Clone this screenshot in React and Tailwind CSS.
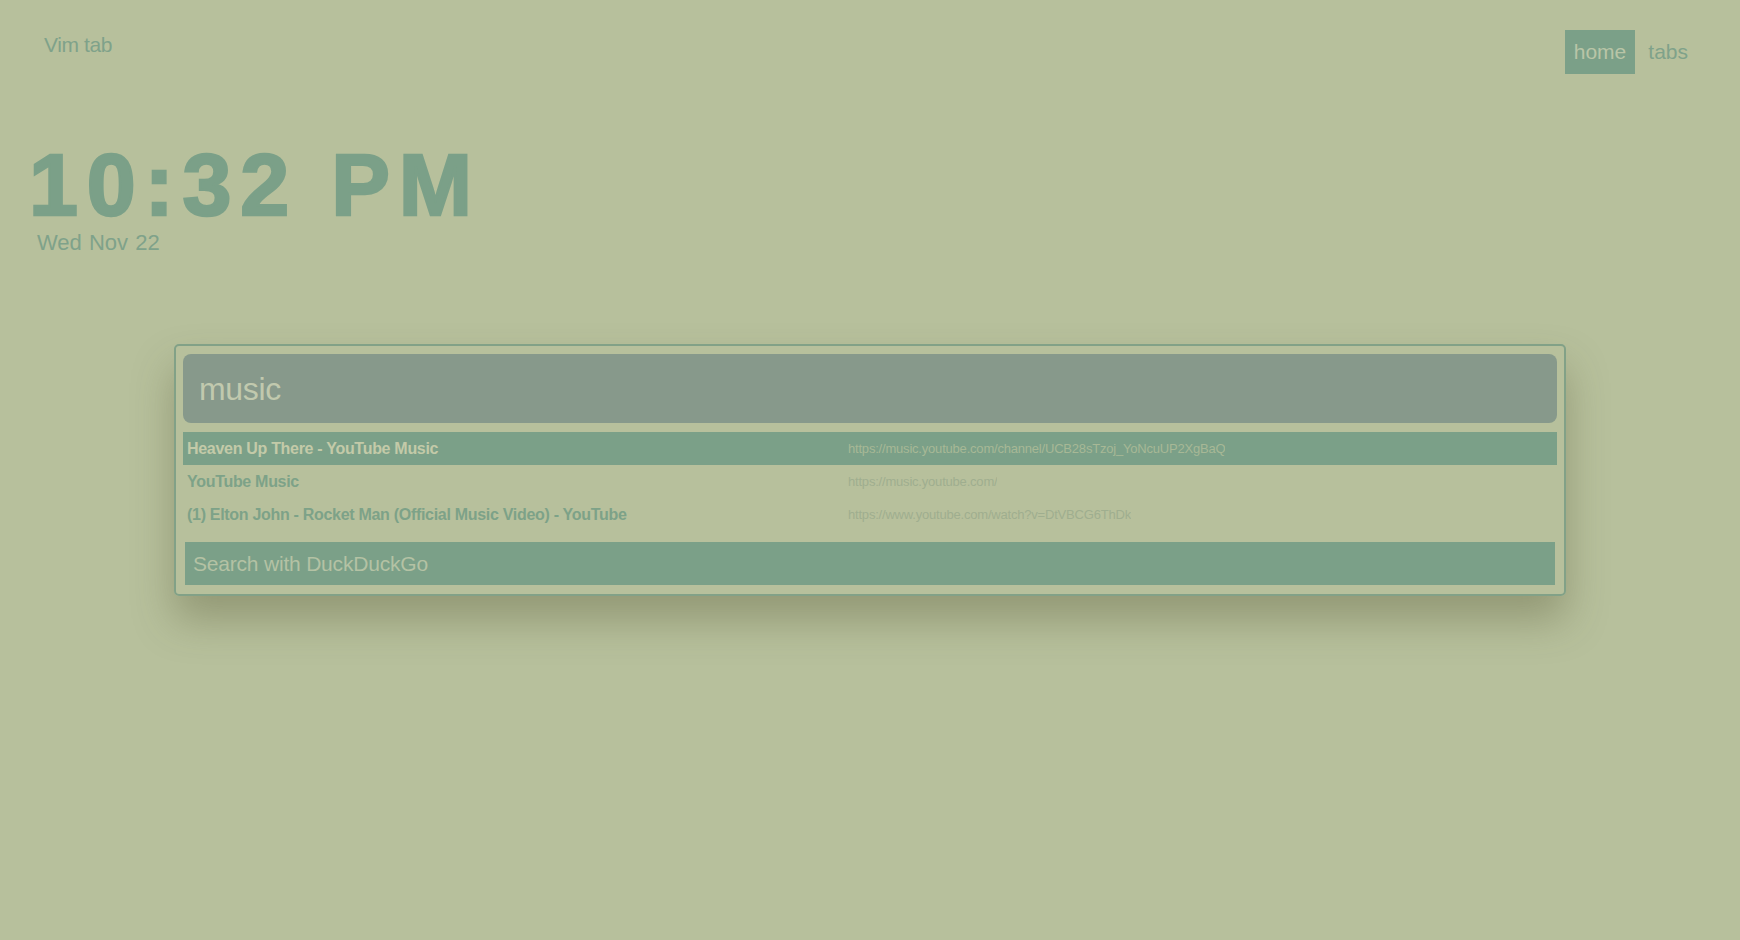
import React from 'react';

const results = [
  {
    title: 'Heaven Up There - YouTube Music',
    url: 'https://music.youtube.com/channel/UCB28sTzoj_YoNcuUP2XgBaQ',
    active: true,
  },
  {
    title: 'YouTube Music',
    url: 'https://music.youtube.com/',
  },
  {
    title: '(1) Elton John - Rocket Man (Official Music Video) - YouTube',
    url: 'https://www.youtube.com/watch?v=DtVBCG6ThDk',
  },
];

function ResultRow({ title, url, active }) {
  return (
    <div
      className={
        'flex items-center h-[33px] pl-[4px] ' + (active ? 'bg-[#7ba088]' : '')
      }
    >
      <div
        className={
          'w-[661px] shrink-0 text-[16px] font-bold tracking-[-0.3px] truncate ' +
          (active ? 'text-[#c3caa8]' : 'text-[#7da288]')
        }
      >
        {title}
      </div>
      <div
        className={
          'text-[13px] tracking-[-0.2px] truncate ' +
          (active ? 'text-[#a7b896]' : 'text-[#9fae8f]')
        }
      >
        {url}
      </div>
    </div>
  );
}

export default function App() {
  return (
    <div className="min-h-screen w-full bg-[#b7c09c] font-['Liberation_Sans',Arial,sans-serif] pb-[40px]">
      {/* top bar */}
      <header className="flex items-start justify-between px-[44px] pt-[30px]">
        <div className="pt-[4px] text-[21px] leading-none tracking-[-0.4px] text-[#7fa28a]">
          Vim tab
        </div>
        <nav className="flex items-center gap-[5px]">
          <span className="h-[44px] px-[9px] flex items-center bg-[#7ba088] text-[21px] text-[#b9c5a7]">
            home
          </span>
          <span className="h-[44px] px-[8px] flex items-center text-[21px] text-[#7fa28a]">
            tabs
          </span>
        </nav>
      </header>

      {/* clock */}
      <section className="mt-[67px] pl-[29px]">
        <div className="text-[88px] leading-none font-bold tracking-[0.1em] text-[#7ba088] [-webkit-text-stroke:2.5px_#7ba088]">
          10:32 PM
        </div>
        <div className="mt-[3px] ml-[8px] text-[22px] leading-none text-[#7fa28a] [word-spacing:1px]">
          Wed Nov 22
        </div>
      </section>

      {/* search panel */}
      <main className="mx-auto mt-[90px] w-[1392px] border-2 border-[#82a187] rounded-[5px] px-[7px] pt-[8px] pb-[9px] shadow-[0_24px_40px_rgba(80,80,45,0.35)]">
        <div className="h-[69px] rounded-[8px] bg-[#87998b] flex items-center px-[16px]">
          <span className="text-[32px] text-[#c1c9ae] tracking-[-0.3px]">music</span>
        </div>
        <div className="mt-[9px] flex flex-col">
          {results.map((r) => (
            <ResultRow key={r.url} {...r} />
          ))}
        </div>
        <div className="mt-[11px] mx-[2px] h-[43px] bg-[#7ba088] flex items-center px-[8px]">
          <span className="text-[21px] text-[#b4c2a4] tracking-[-0.2px]">Search with DuckDuckGo</span>
        </div>
      </main>
    </div>
  );
}
